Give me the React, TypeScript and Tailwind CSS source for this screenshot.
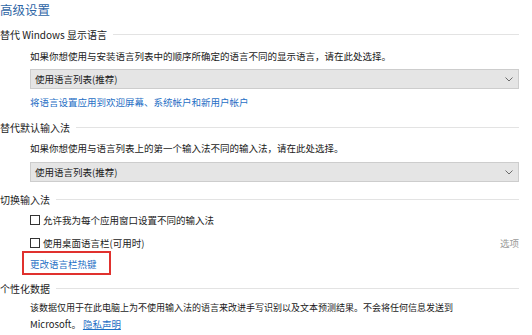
import { ReactNode } from 'react';

const font = { fontFamily: '"Noto Sans CJK SC", "Noto Sans", sans-serif' };

const SectionHeader = ({ title, className = '' }: { title: string; className?: string }) => (
  <div className={`flex h-[20px] items-center gap-[6px] text-[10px] text-[#1a1a1a] ${className}`}>
    <span className="whitespace-nowrap">{title}</span>
    <div className="h-px flex-1 bg-[#e3e3e3]" />
  </div>
);

const Select = ({ value, className = '' }: { value: string; className?: string }) => (
  <div
    className={`ml-[30px] flex h-[20px] items-center justify-between border border-[#cdcdcd] bg-[#e5e5e5] pl-[4px] pr-[5px] text-[9.5px] text-[#1a1a1a] ${className}`}
  >
    <span>{value}</span>
    <svg width="8" height="5" viewBox="0 0 8 5" className="text-[#6b6b6b]">
      <path d="M0.5 0.5 L4 4 L7.5 0.5" fill="none" stroke="currentColor" strokeWidth="1" />
    </svg>
  </div>
);

const Row = ({ children, className = '' }: { children: ReactNode; className?: string }) => (
  <div className={`ml-[30px] flex h-[16px] items-center text-[9.5px] text-[#1a1a1a] ${className}`}>
    {children}
  </div>
);

const Checkbox = ({ label, className = '' }: { label: string; className?: string }) => (
  <Row className={`h-[20px] gap-[3px] ${className}`}>
    <span className="h-[10px] w-[10px] border border-[#333] bg-white" />
    <span>{label}</span>
  </Row>
);

export default function App() {
  return (
    <div className="h-[335px] w-[532px] overflow-hidden bg-white" style={font}>
      <div className="w-[519px]">
        <div className="flex h-[20px] items-center text-[12.5px] text-[#2f66a6]">高级设置</div>

        <SectionHeader title="替代 Windows 显示语言" className="mt-[4px]" />
        <Row className="mt-[4px]">如果你想使用与安装语言列表中的顺序所确定的语言不同的显示语言，请在此处选择。</Row>
        <Select value="使用语言列表(推荐)" className="mt-[5px]" />
        <Row className="mt-[5px] h-[16px] text-[#1f6fc5]">将语言设置应用到欢迎屏幕、系统帐户和新用户帐户</Row>

        <SectionHeader title="替代默认输入法" className="mt-[7px]" />
        <Row className="mt-[3px] h-[16px]">如果你想使用与语言列表上的第一个输入法不同的输入法，请在此处选择。</Row>
        <Select value="使用语言列表(推荐)" className="mt-[6px]" />

        <SectionHeader title="切换输入法" className="mt-[7px]" />
        <Checkbox label="允许我为每个应用窗口设置不同的输入法" className="mt-[1px]" />
        <div className="mt-[3px] flex h-[20px] items-center">
          <Checkbox label="使用桌面语言栏(可用时)" className="flex-1" />
          <span className="text-[9.5px] text-[#9a9a9a]">选项</span>
        </div>
        <Row className="relative mt-[1px] h-[20px] text-[#1f6fc5]">
          <span>更改语言栏热键</span>
          <div className="absolute -top-[3px] left-[-8px] h-[24px] w-[89px] border-2 border-[#e0312e]" />
        </Row>

        <SectionHeader title="个性化数据" className="mt-[4px]" />
        <Row className="mt-[2px] h-[16px] text-[9px]">该数据仅用于在此电脑上为不使用输入法的语言来改进手写识别以及文本预测结果。不会将任何信息发送到</Row>
        <Row className="h-[14px]">
          <span>Microsoft。</span>
          <span className="ml-[2px] text-[#1f6fc5] underline">隐私声明</span>
        </Row>
      </div>
    </div>
  );
}
